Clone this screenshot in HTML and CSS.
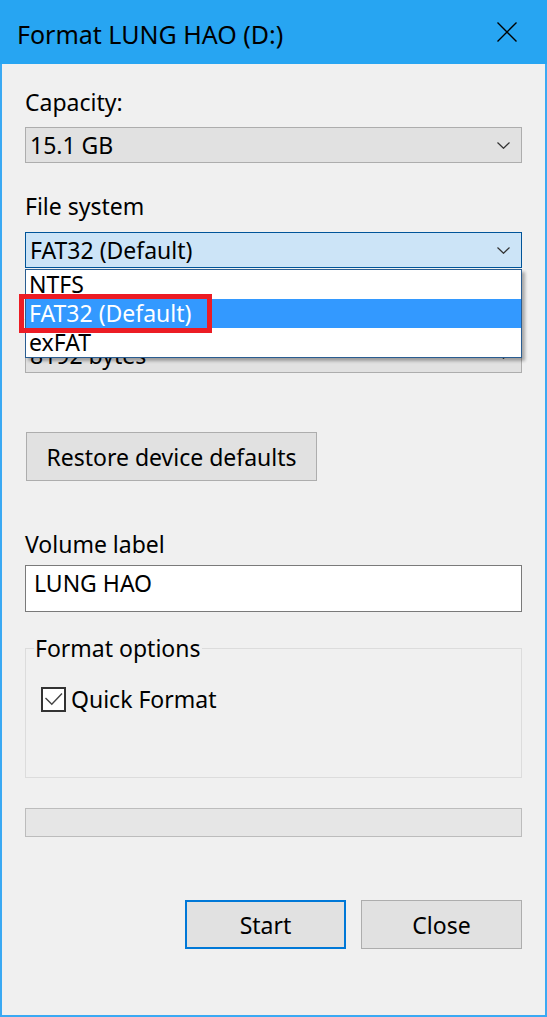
FILE: index.html
```html
<!DOCTYPE html>
<html>
<head>
<meta charset="utf-8">
<title>Format LUNG HAO (D:)</title>
<link rel="stylesheet" href="styles.css">
</head>
<body>
<div class="window">
  <header class="titlebar">
    <span class="title">Format LUNG HAO (D:)</span>
    <svg class="close" width="20" height="20" viewBox="0 0 20 20" aria-hidden="true"><path d="M0.5 0.5L19.5 19.5M19.5 0.5L0.5 19.5" stroke="#000" stroke-width="1.4" fill="none"/></svg>
  </header>
  <main class="content">
    <div class="label">Capacity:</div>
    <div class="combo">
      <span>15.1 GB</span>
      <svg class="chev" width="13" height="7" viewBox="0 0 13 7"><path d="M0.5 0.5L6.5 6.3L12.5 0.5" stroke="#333" stroke-width="1.2" fill="none"/></svg>
    </div>

    <div class="label sect">File system</div>
    <div class="combo-wrap">
      <div class="combo focus">
        <span>FAT32 (Default)</span>
        <svg class="chev" width="13" height="7" viewBox="0 0 13 7"><path d="M0.5 0.5L6.5 6.3L12.5 0.5" stroke="#333" stroke-width="1.2" fill="none"/></svg>
      </div>
      <ul class="dropdown">
        <li>NTFS</li>
        <li class="sel">FAT32 (Default)<span class="mark"></span></li>
        <li>exFAT</li>
      </ul>
    </div>

    <div class="label sect">Allocation unit size</div>
    <div class="combo">
      <span>8192 bytes</span>
      <svg class="chev" width="13" height="7" viewBox="0 0 13 7"><path d="M0.5 0.5L6.5 6.3L12.5 0.5" stroke="#333" stroke-width="1.2" fill="none"/></svg>
    </div>

    <button class="btn restore">Restore device defaults</button>

    <div class="label vol">Volume label</div>
    <div class="input">LUNG HAO</div>

    <fieldset class="group">
      <legend>Format options</legend>
      <div class="check">
        <span class="box"><svg width="21" height="21" viewBox="0 0 21 21"><path d="M2.5 9L8.8 15.3L19 4.5" stroke="#444" stroke-width="1.4" fill="none"/></svg></span>
        <span>Quick Format</span>
      </div>
    </fieldset>

    <div class="progress"></div>

    <div class="actions">
      <button class="btn primary">Start</button>
      <button class="btn">Close</button>
    </div>
  </main>
</div>
</body>
</html>
```

FILE: styles.css
```css
* { box-sizing: border-box; }
html, body { margin: 0; padding: 0; }
body {
  width: 547px;
  height: 1017px;
  font-family: "Noto Sans", "Open Sans", sans-serif;
  font-size: 23px;
  color: #000;
  background: #f0f0f0;
}
.window {
  width: 547px;
  height: 1017px;
  border: 2px solid #3aa9f3;
  border-top: 0;
  display: flex;
  flex-direction: column;
  background: #f0f0f0;
}
.titlebar {
  height: 64px;
  margin: 0 -2px;
  background: #27a5f2;
  display: flex;
  align-items: center;
  justify-content: space-between;
  padding: 0 30px 0 17px;
  flex: none;
}
.title {
  font-size: 25px;
  line-height: 28px;
  padding-top: 3px;
}
.close { display: block; }

.content {
  flex: 1;
  padding: 24px 23px 0 23px;
  display: flex;
  flex-direction: column;
}
.label {
  height: 28px;
  line-height: 28px;
  margin-bottom: 11px;
  white-space: nowrap;
}
.label.sect { margin-top: 29px; margin-bottom: 12px; }
.label.vol { margin-top: 49px; margin-bottom: 7px; }

.combo {
  height: 36px;
  background: #e1e1e1;
  border: 1px solid #adadad;
  display: flex;
  align-items: center;
  justify-content: space-between;
  padding: 0 11px 0 4px;
  white-space: nowrap;
}
.combo.focus {
  background: #cce4f7;
  border: 1px solid #005499;
}
.chev { display: block; }

.combo-wrap { position: relative; }
.dropdown {
  position: absolute;
  z-index: 5;
  left: 0;
  right: 0;
  top: 37px;
  margin: 0;
  padding: 0;
  list-style: none;
  background: #fff;
  border: 1px solid #2a5d91;
  box-shadow: 3px 3px 3px rgba(0,0,0,0.3);
}
.dropdown li {
  height: 29px;
  line-height: 29px;
  padding-left: 3px;
  position: relative;
  white-space: nowrap;
}
.dropdown li.sel {
  background: #3399ff;
  color: #fff;
}
.mark {
  position: absolute;
  left: -7px;
  top: -5px;
  width: 193px;
  height: 39px;
  border: 5px solid #ec1c24;
}

.btn {
  font: inherit;
  color: #000;
  background: #e1e1e1;
  border: 1px solid #adadad;
  padding: 0;
  margin: 0;
  white-space: nowrap;
}
.restore {
  margin-top: 59px;
  width: 291px;
  height: 49px;
  align-self: flex-start;
  margin-left: 1px;
}
.input {
  height: 47px;
  background: #fff;
  border: 1px solid #7a7a7a;
  padding: 3px 0 0 8px;
  line-height: 28px;
}
.group {
  margin: 22px 0 0 0;
  height: 144px;
  border: 1px solid #dcdcdc;
  padding: 0 15px;
  min-width: 0;
}
.group legend {
  padding: 0 1px;
  margin-left: -7px;
  line-height: 28px;
}
.check {
  display: flex;
  align-items: center;
  gap: 5px;
  height: 25px;
  line-height: 25px;
  margin-top: 25px;
}
.box {
  width: 25px;
  height: 25px;
  flex: none;
  border: 2px solid #333;
  background: #fff;
}
.box svg { display: block; }
.progress {
  margin-top: 30px;
  height: 29px;
  background: #e6e6e6;
  border: 1px solid #bcbcbc;
}
.actions {
  margin-top: 63px;
  display: flex;
  justify-content: flex-end;
  gap: 15px;
}
.actions .btn {
  width: 161px;
  height: 49px;
}
.btn.primary {
  border: 2px solid #0078d7;
}
```
